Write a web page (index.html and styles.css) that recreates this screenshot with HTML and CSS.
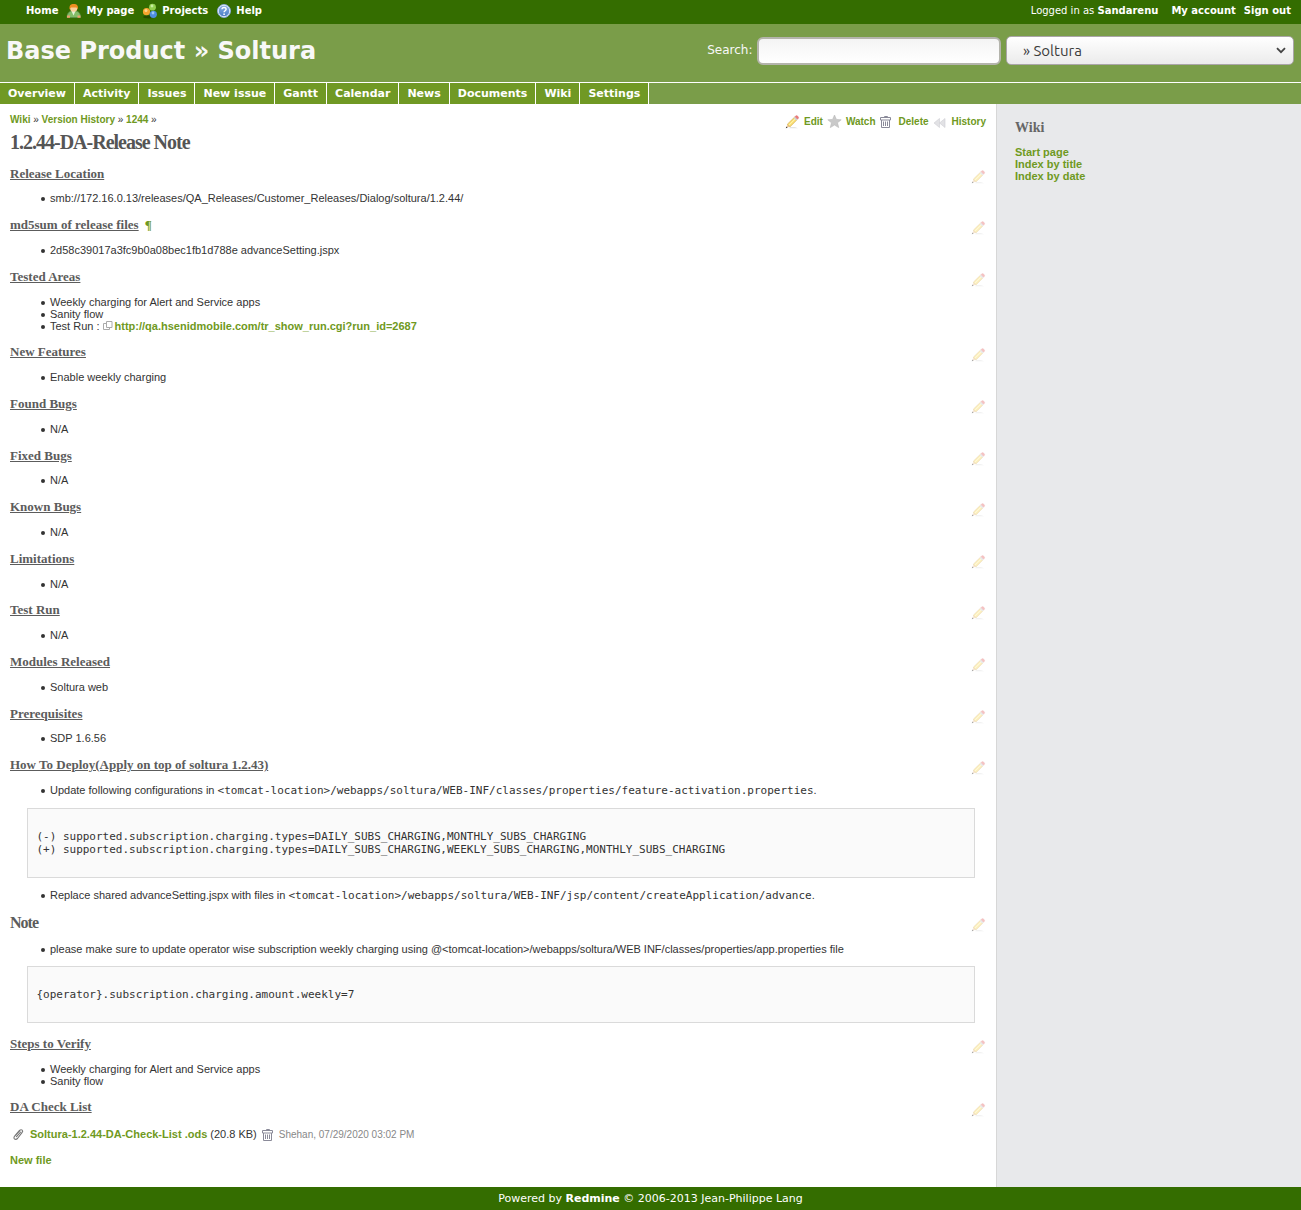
FILE: index.html
```html
<!DOCTYPE html>
<html lang="en">
<head>
<meta charset="utf-8">
<title>1.2.44-DA-Release Note - Soltura</title>
<link rel="stylesheet" href="styles.css">
</head>
<body>
<svg class="defs" aria-hidden="true">
  <linearGradient id="gl" x1="0" y1="0" x2="0" y2="1"><stop offset="0" stop-color="#8fb4e6"/><stop offset="1" stop-color="#4478c4"/></linearGradient>
  <symbol id="user" viewBox="0 0 16 16"><path d="M1 14.500c0-4 2-6 4.500-6.500h4.500c3 .5 4.500 2.500 4.500 6.500z" fill="#83bd68" stroke="#5c9150" stroke-width=".7"/><path d="M5.500 8h4l-2 4.500z" fill="#e4f2d8"/><path d="M1 12.500h3v2.300H1zM11.500 12.500h3v2.300h-3z" fill="#eba26b"/><circle cx="7.700" cy="5.200" r="3.600" fill="#fad09a"/><path d="M3.600 6.500C3 2 5 1 7.700 1s4.800 1 4.200 5.500L10.500 4.500H5z" fill="#ef8e20"/></symbol>
  <symbol id="projects" viewBox="0 0 16 16"><ellipse cx="7" cy="14" rx="6" ry="1.500" fill="#244b00"/><circle cx="10.500" cy="4.200" r="3.400" fill="#91d04e"/><circle cx="4.500" cy="8.700" r="3.600" fill="#f5a52d"/><circle cx="11.300" cy="11.300" r="3.600" fill="#4e8ee0"/><circle cx="10" cy="3" r="1.400" fill="#c7efa0"/><circle cx="4" cy="7.500" r="1.500" fill="#ffd58a"/><circle cx="11" cy="10" r="1.400" fill="#9cc7f7"/></symbol>
  <symbol id="help" viewBox="0 0 16 16"><circle cx="8" cy="8" r="6.500" fill="url(#gl)" stroke="#8ba9d4"/><circle cx="8" cy="8" r="5.700" fill="none" stroke="#dfe9f8"/><path d="M6 6.300c0-2.600 4.200-2.400 4.100 0 0 1.500-2 1.400-2 3" fill="none" stroke="#fff" stroke-width="1.500"/><path d="M7.300 10.400h1.600V12H7.300z" fill="#fff"/></symbol>
  <symbol id="pencil" viewBox="0 0 16 16"><path d="M5 14.300h9l-3-1.300H6z" fill="#e3e3e3"/><path d="M2 14l1.700-3.800 2.300 2.300z" fill="#e9c49a"/><path d="M3.400 10.200L10.500 3.200l2.500 2.500L6 12.800z" fill="#fbe172" stroke="#d3a94c" stroke-width=".7"/><path d="M4.900 11.200L11.700 4.500" stroke="#fff3b3"/><path d="M9.800 4l1.500-1.500 2.500 2.500-1.500 1.500z" fill="#cfd3d9"/><path d="M11.100 2.600l.8-.8c1.200-.7 3.200 1.200 2.500 2.400l-.9.900z" fill="#ee7878" stroke="#d66060" stroke-width=".5"/><path d="M1.800 14.300l.6-1.700 1.200 1.100z" fill="#333"/></symbol>
  <symbol id="star" viewBox="0 0 16 16"><path d="M8.500 1l1.900 4.400 4.800.4-3.700 3 1.200 4.800-4.200-2.600-4.200 2.600 1.200-4.800-3.700-3 4.800-.4z" fill="#c9c9c9" stroke="#b9b9b9" stroke-width=".6"/></symbol>
  <symbol id="trash" viewBox="0 0 16 16"><path d="M5.500 3.500v-1h3v1M1.500 6v-2.500h10V6zM2.500 6v7.500h8V6M4.500 7.500v4.500M6.500 7.500v4.500M8.500 7.500v4.500" fill="none" stroke="#8a8a99"/></symbol>
  <symbol id="history" viewBox="0 0 16 16"><path d="M7.500 4.500v9l-5.500-4.500zM13 4.500v9L7.500 9z" fill="#e2e2e5" stroke="#cfcfd3" stroke-width=".6"/></symbol>
  <symbol id="external" viewBox="0 0 10 10"><path d="M3.500 .5h5.500v6h-5.500zM3.500 2.500H.5v6h6v-2" fill="none" stroke="#aaa"/></symbol>
  <symbol id="clip" viewBox="0 0 16 16"><path d="M5 9.500l4.500-5c2-1.800 4.300 0 2.500 2.200L7.500 12.500c-2 2-4.700.2-3-2.200L9.500 5M6.500 10.700L10.700 6" fill="none" stroke="#777" stroke-width="1.100" stroke-linecap="round"/></symbol>
</svg>

<nav class="top-menu">
  <a class="home">Home</a>
  <a><svg class="icon"><use href="#user"/></svg>My page</a>
  <a><svg class="icon"><use href="#projects"/></svg>Projects</a>
  <a><svg class="icon"><use href="#help"/></svg>Help</a>
  <div class="account"><span>Logged in as <b>Sandarenu</b></span><a class="my-account">My account</a><a>Sign out</a></div>
</nav>
<header class="header">
  <div class="banner">
    <h1>Base Product » Soltura</h1>
    <label for="q">Search:</label>
    <input id="q" class="search" type="text">
    <div class="jump"><span>» Soltura</span><svg width="10" height="7"><path d="M1 1.200l4 4 4-4" fill="none" stroke="#444" stroke-width="1.800"/></svg></div>
  </div>
  <nav class="tabs"><a>Overview</a><a>Activity</a><a>Issues</a><a>New issue</a><a>Gantt</a><a>Calendar</a><a>News</a><a>Documents</a><a>Wiki</a><a>Settings</a></nav>
</header>
<div class="main">
  <main class="content">
    <div class="page-bar">
      <div class="crumbs"><a>Wiki</a> » <a>Version History</a> » <a>1244</a> »</div>
      <div class="actions">
        <a><svg class="icon"><use href="#pencil"/></svg>Edit</a>
        <a><svg class="icon"><use href="#star"/></svg>Watch</a>
        <a><svg class="icon"><use href="#trash"/></svg>Delete</a>
        <a><svg class="icon"><use href="#history"/></svg>History</a>
      </div>
    </div>
    <h2>1.2.44-DA-Release Note</h2>

    <section><header><h3>Release Location</h3><svg class="icon"><use href="#pencil"/></svg></header><ul><li>smb://172.16.0.13/releases/QA_Releases/Customer_Releases/Dialog/soltura/1.2.44/</li></ul></section>
    <section><header><h3>md5sum of release files</h3><a class="anchor">¶</a><svg class="icon"><use href="#pencil"/></svg></header><ul><li>2d58c39017a3fc9b0a08bec1fb1d788e advanceSetting.jspx</li></ul></section>
    <section><header><h3>Tested Areas</h3><svg class="icon"><use href="#pencil"/></svg></header><ul><li>Weekly charging for Alert and Service apps</li><li>Sanity flow</li><li>Test Run : <a><svg class="external"><use href="#external"/></svg>http://qa.hsenidmobile.com/tr_show_run.cgi?run_id=2687</a></li></ul></section>
    <section><header><h3>New Features</h3><svg class="icon"><use href="#pencil"/></svg></header><ul><li>Enable weekly charging</li></ul></section>
    <section><header><h3>Found Bugs</h3><svg class="icon"><use href="#pencil"/></svg></header><ul><li>N/A</li></ul></section>
    <section><header><h3>Fixed Bugs</h3><svg class="icon"><use href="#pencil"/></svg></header><ul><li>N/A</li></ul></section>
    <section><header><h3>Known Bugs</h3><svg class="icon"><use href="#pencil"/></svg></header><ul><li>N/A</li></ul></section>
    <section><header><h3>Limitations</h3><svg class="icon"><use href="#pencil"/></svg></header><ul><li>N/A</li></ul></section>
    <section><header><h3>Test Run</h3><svg class="icon"><use href="#pencil"/></svg></header><ul><li>N/A</li></ul></section>
    <section><header><h3>Modules Released</h3><svg class="icon"><use href="#pencil"/></svg></header><ul><li>Soltura web</li></ul></section>
    <section><header><h3>Prerequisites</h3><svg class="icon"><use href="#pencil"/></svg></header><ul><li>SDP 1.6.56</li></ul></section>
    <section class="deploy"><header><h3>How To Deploy(Apply on top of soltura 1.2.43)</h3><svg class="icon"><use href="#pencil"/></svg></header>
      <ul><li>Update following configurations in <code>&lt;tomcat-location&gt;/webapps/soltura/WEB-INF/classes/properties/feature-activation.properties</code>.</li></ul>
<pre>(-) supported.subscription.charging.types=DAILY_SUBS_CHARGING,MONTHLY_SUBS_CHARGING
(+) supported.subscription.charging.types=DAILY_SUBS_CHARGING,WEEKLY_SUBS_CHARGING,MONTHLY_SUBS_CHARGING</pre>
      <ul><li>Replace shared advanceSetting.jspx with files in <code>&lt;tomcat-location&gt;/webapps/soltura/WEB-INF/jsp/content/createApplication/advance</code>.</li></ul>
    </section>
    <section class="note"><header><h3>Note</h3><svg class="icon"><use href="#pencil"/></svg></header>
      <ul><li>please make sure to update operator wise subscription weekly charging using @&lt;tomcat-location&gt;/webapps/soltura/WEB INF/classes/properties/app.properties file</li></ul>
<pre>{operator}.subscription.charging.amount.weekly=7</pre>
    </section>
    <section><header><h3>Steps to Verify</h3><svg class="icon"><use href="#pencil"/></svg></header><ul><li>Weekly charging for Alert and Service apps</li><li>Sanity flow</li></ul></section>
    <section class="checklist"><header><h3>DA Check List</h3><svg class="icon"><use href="#pencil"/></svg></header></section>
    <div class="attachment"><svg class="icon"><use href="#clip"/></svg><a>Soltura-1.2.44-DA-Check-List .ods</a><span class="size">(20.8 KB)</span><svg class="icon bin"><use href="#trash"/></svg><span class="author">Shehan, 07/29/2020 03:02 PM</span></div>
    <a class="new-file">New file</a>
  </main>
  <aside class="sidebar"><h3>Wiki</h3><a>Start page</a><a>Index by title</a><a>Index by date</a></aside>
</div>
<footer class="footer">Powered by <b>Redmine</b> © 2006-2013 Jean-Philippe Lang</footer>
</body>
</html>
```
FILE: styles.css
```css
* { box-sizing: border-box; }
body { margin: 0; height: 1210px; display: flex; flex-direction: column; font: 11px/12px "Liberation Sans", Arial, sans-serif; color: #333; background: #fff; }
h1, h2, h3, ul, pre { margin: 0; padding: 0; }
a { color: #6f9922; font-weight: bold; text-decoration: none; }
.defs { position: absolute; width: 0; height: 0; }
.icon { width: 16px; height: 16px; flex: none; }

.top-menu { height: 24px; padding: 0 10px 3px 26px; display: flex; align-items: center; gap: 8px; background: #346d00; color: #fff; font: 10px/12px "DejaVu Sans", Verdana, sans-serif; }
.top-menu a { display: flex; align-items: center; color: #fff; }
.top-menu a .icon { margin-right: 4px; }
.account { margin-left: auto; display: flex; gap: 8px; }
.account .my-account { margin-left: 5px; }

.header { background: #7a9d49; color: #f8f8f8; font-family: "DejaVu Sans", Verdana, sans-serif; }
.banner { height: 58px; padding: 0 7px 5px 6px; display: flex; align-items: center; }
.banner h1 { margin-right: auto; font-size: 24px; line-height: 28px; }
.banner label { margin: -1px 4px 0 0; font-size: 12px; }
.search { width: 244px; height: 28px; margin-right: 5.500px; border: 2px solid #b4b4ac; border-radius: 6px; background: linear-gradient(#f4f4f4, #fff); }
.jump { width: 288px; height: 29px; padding: 0 7px 0 16px; display: flex; align-items: center; justify-content: space-between; border: 1px solid #aaa5a8; border-radius: 5px; background: linear-gradient(#fff, #ebebeb); color: #3c3c3c; font: 15px/18px Ubuntu, "Noto Sans", sans-serif; }
.tabs { height: 22px; display: flex; border-top: 1px solid #fff; font-size: 11px; line-height: 21px; }
.tabs a { padding: 0 8px; border-right: 1px solid #fff; background: #709924; color: #fff; }

.main { flex: 1; display: flex; }
.content { width: 996px; padding: 9px 10px 0; }
.page-bar { height: 18px; display: flex; justify-content: space-between; font-size: 10px; }
.crumbs { line-height: 13px; }
.actions { display: flex; gap: 3px; }
.actions a { display: flex; align-items: center; height: 17px; }
.actions .icon { margin-right: 4px; }
h2 { margin-bottom: 11.690px; font: bold 20px/23px "Liberation Serif", "Times New Roman", serif; letter-spacing: -1px; color: #555; }
h3 { font: bold 13px/15px "Liberation Serif", "Times New Roman", serif; color: #5c5c5c; }
section { padding-bottom: 12.895px; }
section header { height: 15px; margin-bottom: 11.705px; display: flex; align-items: flex-start; }
section h3 { text-decoration: underline; }
section header .icon { margin: 3px 0 -4px auto; opacity: .45; }
.anchor { margin-left: 6px; font: bold 13px/15px "Liberation Serif", serif; }
ul { padding-left: 40px; list-style: none; }
li { display: block; height: 12px; }
li::before { content: ""; display: inline-block; width: 4px; height: 4px; margin: 0 5.500px 0 -9.500px; border-radius: 50%; background: #333; vertical-align: 1px; }
.external { width: 10px; height: 10px; margin-right: 2px; vertical-align: -1px; }
code, pre { font: 11px/13px "DejaVu Sans Mono", monospace; }
code { line-height: 12px; }
pre { margin: 12.050px 11px 11px 17px; padding: 21px 8.400px; height: 70px; border: 1px solid #dadada; background: #fafafa; }
.deploy { padding-bottom: 13px; }
.note header { height: 18px; margin-bottom: 11px; }
.note h3 { font-size: 16px; line-height: 18px; letter-spacing: -1px; text-decoration: none; }
.note pre { height: 57px; margin: 11px 11px 0 17px; }
.note { padding-bottom: 12.850px; }
.checklist { padding-bottom: 0; }
.attachment { display: flex; align-items: center; height: 16px; }
.attachment a { margin-left: 4px; }
.size { margin-left: 3px; }
.bin { margin: 1px 0 0 4px; }
.author { margin: 2px 0 0 2px; font-size: 10px; color: #888; }
.new-file { display: block; margin-top: 12px; }

.sidebar { flex: 1; padding: 16px 18px; border-left: 1px solid #d7d7d7; background: #e8e9eb; }
.sidebar h3 { margin-bottom: 10px; font-size: 14px; line-height: 16px; color: #666; }
.sidebar a { display: block; }
.footer { height: 23px; background: #346d00; color: #fff; text-align: center; font: 11px/23px "DejaVu Sans", Verdana, sans-serif; }
```
